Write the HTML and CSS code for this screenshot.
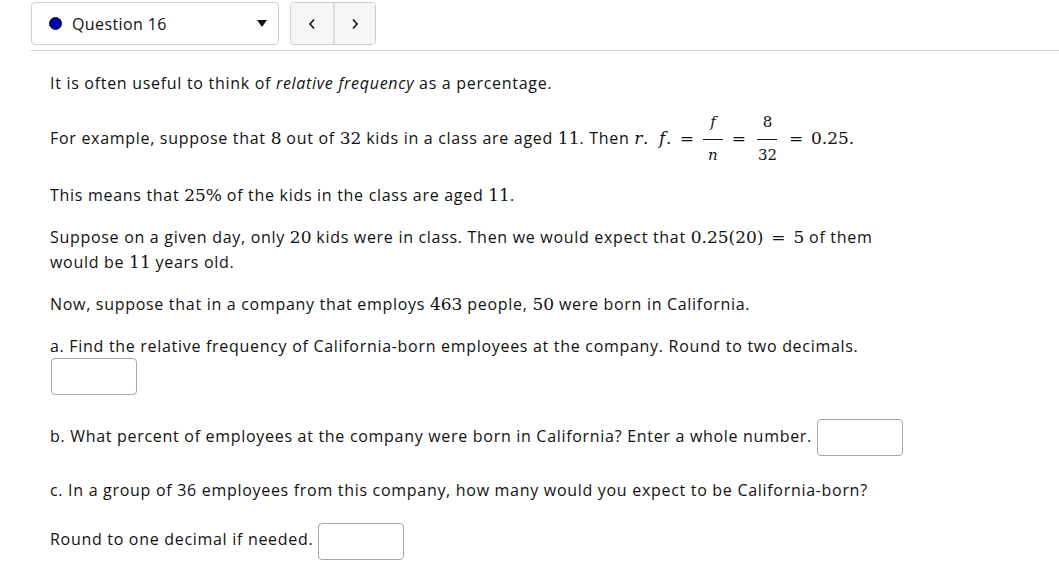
FILE: index.html
```html
<!DOCTYPE html>
<html>
<head>
<meta charset="utf-8">
<link rel="stylesheet" href="styles.css">
</head>
<body>
<div class="header">
  <div class="select">
    <span class="dot"></span>
    <span class="qlabel">Question 16</span>
    <span class="caret"></span>
  </div>
  <div class="nav">
    <button class="navbtn" aria-label="Previous"><svg width="8" height="12" viewBox="0 0 8 12"><polyline points="6,1.5 2,6 6,10.5" fill="none" stroke="#111" stroke-width="1.6"/></svg></button>
    <button class="navbtn" aria-label="Next"><svg width="8" height="12" viewBox="0 0 8 12"><polyline points="2,1.5 6,6 2,10.5" fill="none" stroke="#111" stroke-width="1.6"/></svg></button>
  </div>
</div>
<div class="content">
  <p class="p1">It is often useful to think of <em>relative frequency</em> as a percentage.</p>
  <p class="p2">For example, suppose that <span class="m">8</span> out of <span class="m">32</span> kids in a class are aged <span class="m">11</span>. Then <span class="m rf"><i>r</i>. <i>f</i>.</span> <span class="m op">=</span> <span class="frac"><span class="num"><i>f</i></span><span class="den"><i>n</i></span></span> <span class="m op">=</span> <span class="frac"><span class="num">8</span><span class="den">32</span></span> <span class="m op">=</span> <span class="m">0.25.</span></p>
  <p class="p3">This means that <span class="m">25%</span> of the kids in the class are aged <span class="m">11</span>.</p>
  <p class="p4"><span>Suppose on a given day, only</span> <span class="m">20</span> <span>kids were in class. Then we would expect that</span> <span class="m">0.25(20)</span> <span class="m op">=</span> <span class="m">5</span> <span>of them</span> <span>would be</span> <span class="m">11</span> <span>years old.</span></p>
  <p class="p5">Now, suppose that in a company that employs <span class="m">463</span> people, <span class="m">50</span> were born in California.</p>
  <div class="p6">
    <div class="line">a. Find the relative frequency of California-born employees at the company. Round to two decimals.</div>
    <span class="box"></span>
  </div>
  <p class="p7">b. What percent of employees at the company were born in California? Enter a whole number. <span class="box"></span></p>
  <p class="p8">c. In a group of 36 employees from this company, how many would you expect to be California-born?</p>
  <p class="p9">Round to one decimal if needed. <span class="box"></span></p>
</div>
</body>
</html>
```

FILE: styles.css
```css
html, body {
  margin: 0;
  padding: 0;
  background: #fff;
}
body {
  font-family: "Open Sans", "Noto Sans", sans-serif;
  font-size: 16px;
  letter-spacing: 0.7px;
  color: #111;
  width: 1059px;
  height: 563px;
  overflow: hidden;
}
.header {
  display: flex;
  align-items: flex-start;
  gap: 11px;
  margin-left: 31px;
  padding-top: 2px;
  height: 48px;
  border-bottom: 1px solid #d0d0d0;
}
.select {
  box-sizing: border-box;
  width: 248px;
  height: 43px;
  border: 1px solid #cfcfcf;
  border-radius: 4px;
  display: flex;
  align-items: center;
  padding-left: 17px;
  padding-right: 10px;
}
.dot {
  width: 11px;
  height: 11px;
  border-radius: 50%;
  background: #0000a8;
  border: 1px solid #111;
  margin-right: 10px;
}
.qlabel {
  flex: 1;
  font-size: 16px;
  letter-spacing: 0.4px;
}
.caret {
  width: 0;
  height: 0;
  border-left: 5px solid transparent;
  border-right: 5px solid transparent;
  border-top: 7px solid #111;
  margin-right: 1px;
}
.nav {
  display: flex;
  height: 43px;
  border: 1px solid #cfcfcf;
  border-radius: 4px;
  overflow: hidden;
  box-sizing: border-box;
}
.navbtn {
  width: 42px;
  height: 41px;
  border: none;
  background: #f6f6f6;
  padding: 0;
  display: flex;
  align-items: center;
  justify-content: center;
}
.navbtn + .navbtn {
  border-left: 2px solid #dcdcdc;
}
.content {
  padding-left: 50px;
  padding-top: 20px;
}
p, .p6 {
  margin: 0;
  line-height: 25px;
}
em {
  font-style: italic;
}
.m {
  font-family: "DejaVu Serif", "Liberation Serif", serif;
  font-size: 17px;
  line-height: 20px;
  letter-spacing: 0;
}
.rf {
  word-spacing: 4px;
  letter-spacing: 0.6px;
}
.op {
  margin: 0 3px;
}
.frac {
  display: inline-flex;
  flex-direction: column;
  align-items: center;
  vertical-align: middle;
  margin: 0 1px;
  font-family: "DejaVu Serif", "Liberation Serif", serif;
  font-size: 15px;
  letter-spacing: 0;
  position: relative;
  top: -1px;
}
.num {
  display: block;
  line-height: 20px;
  padding: 0 3px 7px;
  border-bottom: 1px solid #111;
  min-width: 14px;
  text-align: center;
}
.den {
  display: block;
  line-height: 20px;
  padding: 5px 3px 0;
  text-align: center;
}
.p1 { margin-bottom: 17px; }
.p2 { line-height: 51px; margin-bottom: 17px; }
.p3 { margin-bottom: 17px; }
.p4 { margin-bottom: 17px; width: 840px; }
.p5 { margin-bottom: 17px; }
.p6 { margin-bottom: 23px; }
.p6 .line { line-height: 25px; }
.box {
  display: inline-block;
  box-sizing: border-box;
  width: 86px;
  height: 37px;
  border: 1px solid #a6a6a6;
  border-radius: 4px;
  vertical-align: middle;
  background: #fff;
}
.p6 .box { display: block; margin-top: -1px; margin-left: 1px; }
.p7 { line-height: 37px; margin-bottom: 22px; }
.p8 { margin-bottom: 18px; }
.p9 { line-height: 37px; }
```
